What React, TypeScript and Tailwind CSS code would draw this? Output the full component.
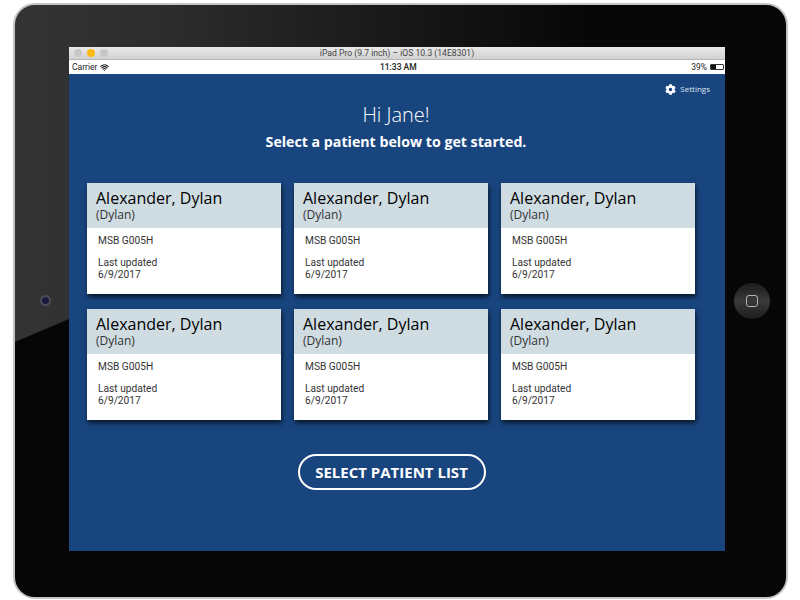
import { Wifi } from "lucide-react";
import { FaCog } from "react-icons/fa";

const sans = "font-['Open_Sans','Noto_Sans',sans-serif]";
const roboto = "font-['Roboto','Liberation_Sans',sans-serif]";

function Card() {
  return (
    <div className="flex h-[111px] w-[194px] flex-col bg-white shadow-[1px_3px_5px_rgba(0,0,0,0.7)]">
      <div className={`h-[45px] bg-[#cfdce2] pl-[9px] pt-[5px] text-black ${sans}`}>
        <div className="text-[16px] font-medium leading-[20px]">Alexander, Dylan</div>
        <div className="text-[12px] leading-[14px] text-[#333]">(Dylan)</div>
      </div>
      <div className={`pl-[11px] pt-[7px] text-[10.2px] leading-[12px] text-[#333] ${roboto}`}>
        <div>MSB G005H</div>
        <div className="mt-[10px]">Last updated</div>
        <div>6/9/2017</div>
      </div>
    </div>
  );
}

export default function App() {
  return (
    <div className="h-[600px] w-[800px] overflow-hidden bg-white pl-[13px] pt-[3px]">
      <div className="relative h-[596px] w-[775px] rounded-[22px] border-2 border-[#c4c4c4] bg-[linear-gradient(157deg,transparent_36.6%,#060606_36.7%),linear-gradient(90deg,#343434_0%,#2c2c2c_20%,#181818_50%,#060606_75%)] pl-[54px] pt-[42px]">
        <div className="absolute left-[25px] top-[290px] h-[11px] w-[11px] rounded-full border-2 border-[#4a4f5a] bg-[#1c1a3a]" />
        <div className="absolute left-[719px] top-[278px] flex h-[36px] w-[36px] items-center justify-center rounded-full bg-gradient-to-b from-[#1c1c1c] via-[#3a3a3a] to-[#1c1c1c]">
          <div className="h-[12px] w-[12px] rounded-[3px] border-[1.5px] border-[#b5b5b5]" />
        </div>
        <div className="flex h-[504px] w-[656px] flex-col">
          <div className="relative flex h-[13px] items-center justify-center border-b border-[#b5b5b5] bg-gradient-to-b from-[#e9e9e9] to-[#d2d2d2]">
            <div className="absolute left-[5px] top-[2px] flex gap-[5px]">
              <div className="h-[8px] w-[8px] rounded-full bg-[#c8c8c8]" />
              <div className="h-[8px] w-[8px] rounded-full bg-[#fdb913]" />
              <div className="h-[8px] w-[8px] rounded-full bg-[#c8c8c8]" />
            </div>
            <span className={`text-[8.6px] leading-none text-[#444] ${roboto}`}>iPad Pro (9.7 inch) – iOS 10.3 (14E8301)</span>
          </div>
          <div className={`relative flex h-[14px] items-center justify-between bg-white pl-[3px] pr-[1px] text-[8.5px] text-[#222] ${roboto}`}>
            <div className="flex items-center gap-[3px]">
              <span>Carrier</span>
              <Wifi size={9} strokeWidth={3} />
            </div>
            <span className="mr-[4px] font-medium">11:33 AM</span>
            <div className="flex items-center gap-[3px]">
              <span>39%</span>
              <div className="flex h-[6px] w-[14px] rounded-[1px] border border-[#333]">
                <div className="w-[5px] bg-[#111]" />
              </div>
            </div>
          </div>
          <div className={`relative flex flex-1 flex-col bg-[#19457f] text-white ${sans}`}>
            <div className="absolute right-[15px] top-[9px] flex items-center gap-[4px] text-[8px] text-[#dfe6ef]">
              <FaCog size={11} className="text-white" />
              <span>Settings</span>
            </div>
            <div className="mt-[28px] pr-[2px] text-center text-[20px] font-light leading-[26px]">Hi Jane!</div>
            <div className="mt-[4px] pr-[2px] text-center text-[14.2px] font-bold leading-[20px]">Select a patient below to get started.</div>
            <div className="ml-[18px] mt-[31px] grid w-[608px] grid-cols-[194px_194px_194px] gap-x-[13px] gap-y-[15px]">
              {Array.from({ length: 6 }).map((_, i) => (
                <Card key={i} />
              ))}
            </div>
            <div className="mt-[34px] flex justify-center pr-[11px]">
              <div className="flex h-[36px] w-[188px] items-center justify-center rounded-full border-2 border-white text-[15px] font-bold">
                SELECT PATIENT LIST
              </div>
            </div>
          </div>
        </div>
      </div>
    </div>
  );
}
